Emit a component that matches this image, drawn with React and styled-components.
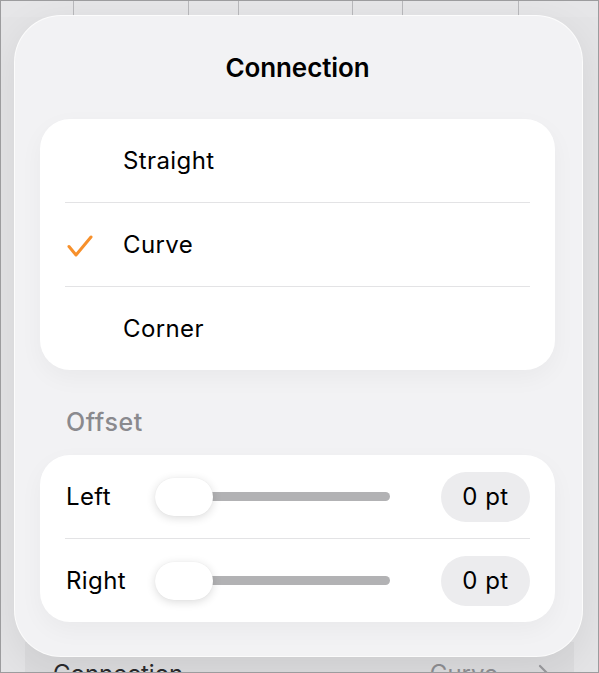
import React from "react";
import styled, { createGlobalStyle } from "styled-components";

const GlobalStyle = createGlobalStyle`
  html, body {
    margin: 0;
    padding: 0;
    background: #ffffff;
  }
  body {
    font-family: Inter, "Open Sans", "Liberation Sans", sans-serif;
    -webkit-font-smoothing: antialiased;
  }
`;

const columnLines = [72, 187, 237, 351, 401, 517];

const shapes = [
  { key: "straight", label: "Straight", checked: false },
  { key: "curve", label: "Curve", checked: true },
  { key: "corner", label: "Corner", checked: false },
];

const offsets = [
  { key: "left", label: "Left", value: 0 },
  { key: "right", label: "Right", value: 0 },
];

function Check() {
  return (
    <svg width="28" height="24" viewBox="0 0 28 24" fill="none">
      <path
        d="M3 12.5 L10 21 L25 3"
        stroke="#f7902b"
        strokeWidth="3"
        strokeLinecap="round"
        strokeLinejoin="round"
      />
    </svg>
  );
}

function Chevron() {
  return (
    <svg width="12" height="20" viewBox="0 0 12 20" fill="none">
      <path d="M2 2 L10 10 L2 18" stroke="#9a9a9e" strokeWidth="2.2" strokeLinecap="round" />
    </svg>
  );
}

export default function App() {
  return (
    <>
      <GlobalStyle />
      <Frame>
        <Backdrop>
          <TopStrip>
            {columnLines.map((x) => (
              <ColumnLine key={x} style={{ left: x }} />
            ))}
          </TopStrip>
          <Spacer />
          <BehindCard>
            <BehindText>Connection</BehindText>
            <BehindValue>
              <BehindText>Curve</BehindText>
              <Chevron />
            </BehindValue>
          </BehindCard>
        </Backdrop>

        <Popover>
          <Title>Connection</Title>

          <Card>
            {shapes.map((s, i) => (
              <React.Fragment key={s.key}>
                {i > 0 && <Divider />}
                <OptionRow>
                  <CheckSlot>{s.checked && <Check />}</CheckSlot>
                  <RowText>{s.label}</RowText>
                </OptionRow>
              </React.Fragment>
            ))}
          </Card>

          <SectionLabel>Offset</SectionLabel>

          <Card>
            {offsets.map((o, i) => (
              <React.Fragment key={o.key}>
                {i > 0 && <Divider />}
                <SliderRow>
                  <RowText>{o.label}</RowText>
                  <Slider>
                    <Track />
                    <Thumb />
                  </Slider>
                  <ValuePill>{o.value} pt</ValuePill>
                </SliderRow>
              </React.Fragment>
            ))}
          </Card>
        </Popover>
      </Frame>
    </>
  );
}

const Frame = styled.div`
  position: relative;
  width: 599px;
  height: 673px;
  box-sizing: border-box;
  border: 1px solid #9c9c9e;
  background: #e4e4e6;
  overflow: hidden;
`;

const Backdrop = styled.div`
  height: 100%;
  display: flex;
  flex-direction: column;
`;

const TopStrip = styled.div`
  position: relative;
  height: 16px;
  background: #e6e6e8;
`;

const ColumnLine = styled.div`
  position: absolute;
  top: 0;
  bottom: 0;
  width: 1px;
  background: #b9b9bc;
`;

const Spacer = styled.div`
  flex: 1;
`;

const BehindCard = styled.div`
  height: 30px;
  margin: 0 24px;
  padding: 17px 24px 0 28px;
  box-sizing: border-box;
  background: #dcdcde;
  display: flex;
  justify-content: space-between;
  align-items: flex-start;
`;

const BehindText = styled.span`
  font-size: 24px;
  line-height: 30px;
  color: #2a2a2c;
`;

const BehindValue = styled.div`
  display: flex;
  align-items: center;
  gap: 40px;

  span {
    color: #8e8e92;
  }
`;

const Popover = styled.div`
  position: absolute;
  top: 15px;
  left: 14px;
  width: 567px;
  height: 640px;
  box-sizing: border-box;
  padding: 0 27px 0 25px;
  border-radius: 46px;
  background: #f2f2f4;
  box-shadow: 0 0 0 1px rgba(255, 255, 255, 0.9), 0 10px 40px rgba(0, 0, 0, 0.08);
  display: flex;
  flex-direction: column;
`;

const Title = styled.div`
  height: 103px;
  display: flex;
  align-items: center;
  justify-content: center;
  font-size: 26px;
  font-weight: 600;
  color: #000;
  letter-spacing: -0.1px;
`;

const Card = styled.div`
  background: #ffffff;
  border-radius: 30px;
  padding: 0 25px;
  box-shadow: 0 8px 24px rgba(0, 0, 0, 0.04);
`;

const Divider = styled.div`
  height: 1px;
  background: #e3e3e5;
`;

const OptionRow = styled.div`
  height: 83px;
  display: flex;
  align-items: center;
`;

const CheckSlot = styled.div`
  width: 57px;
  display: flex;
  align-items: center;
  padding-left: 1px;
  padding-top: 2px;
`;

const RowText = styled.span`
  font-size: 24px;
  color: #000;
  letter-spacing: 0.4px;
`;

const SectionLabel = styled.div`
  height: 85px;
  box-sizing: border-box;
  padding: 37px 0 0 26px;
  font-size: 25px;
  font-weight: 500;
  color: #8a8a8e;
  letter-spacing: 0.6px;
`;

const SliderRow = styled.div`
  height: 83px;
  display: flex;
  align-items: center;

  ${RowText} {
    width: 89px;
    margin-left: 1px;
  }
`;

const Slider = styled.div`
  position: relative;
  width: 235px;
  height: 38px;
  display: flex;
  align-items: center;
`;

const Track = styled.div`
  flex: 1;
  height: 9px;
  margin-left: 40px;
  border-radius: 5px;
  background: #b2b2b4;
`;

const Thumb = styled.div`
  position: absolute;
  left: 0;
  top: 0;
  width: 58px;
  height: 38px;
  border-radius: 19px;
  background: #ffffff;
  box-shadow: 0 2px 10px rgba(0, 0, 0, 0.14), 0 0 1px rgba(0, 0, 0, 0.08);
`;

const ValuePill = styled.div`
  margin-left: auto;
  width: 89px;
  height: 50px;
  border-radius: 25px;
  background: #ececee;
  display: flex;
  align-items: center;
  justify-content: center;
  font-size: 24px;
  letter-spacing: 0.5px;
  color: #000;
`;
